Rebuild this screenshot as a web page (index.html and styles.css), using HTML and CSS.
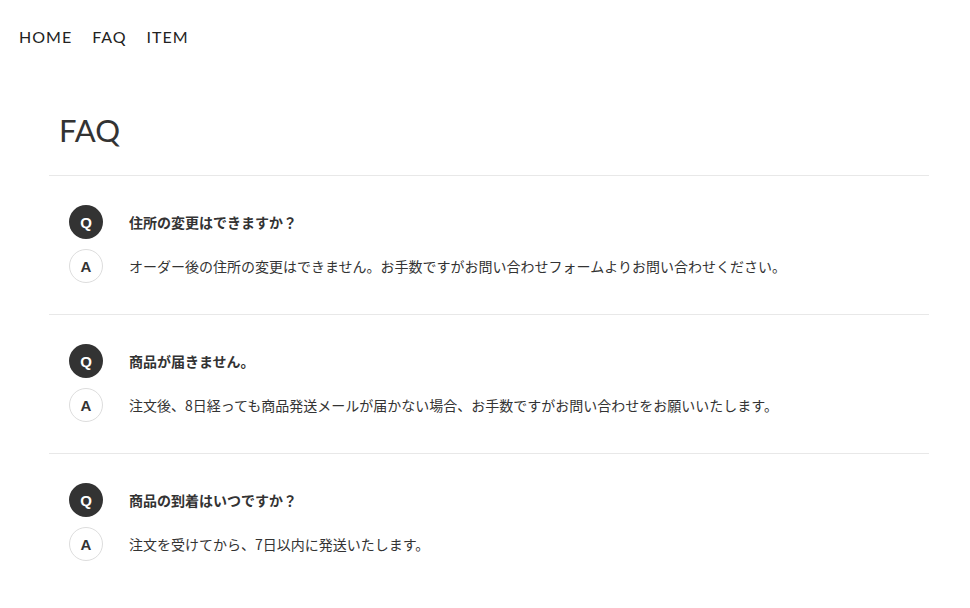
FILE: index.html
```html
<!DOCTYPE html>
<html lang="ja">
<head>
<meta charset="utf-8">
<title>FAQ</title>
<link rel="stylesheet" href="styles.css">
</head>
<body>
<header class="site-header">
  <nav class="nav">
    <a class="nav-link" href="#">HOME</a>
    <a class="nav-link" href="#">FAQ</a>
    <a class="nav-link" href="#">ITEM</a>
  </nav>
</header>
<main class="faq">
  <h1 class="faq-title">FAQ</h1>
  <ul class="faq-list">
    <li class="faq-item">
      <div class="faq-row">
        <span class="badge badge-q">Q</span>
        <p class="question">住所の変更はできますか？</p>
      </div>
      <div class="faq-row">
        <span class="badge badge-a">A</span>
        <p class="answer">オーダー後の住所の変更はできません。お手数ですがお問い合わせフォームよりお問い合わせください。</p>
      </div>
    </li>
    <li class="faq-item">
      <div class="faq-row">
        <span class="badge badge-q">Q</span>
        <p class="question">商品が届きません。</p>
      </div>
      <div class="faq-row">
        <span class="badge badge-a">A</span>
        <p class="answer">注文後、8日経っても商品発送メールが届かない場合、お手数ですがお問い合わせをお願いいたします。</p>
      </div>
    </li>
    <li class="faq-item">
      <div class="faq-row">
        <span class="badge badge-q">Q</span>
        <p class="question">商品の到着はいつですか？</p>
      </div>
      <div class="faq-row">
        <span class="badge badge-a">A</span>
        <p class="answer">注文を受けてから、7日以内に発送いたします。</p>
      </div>
    </li>
  </ul>
</main>
</body>
</html>
```
FILE: styles.css
```css
* { box-sizing: border-box; }
html, body { margin: 0; padding: 0; background: #fff; }
body {
  font-family: Lato, "Noto Sans CJK JP", sans-serif;
  color: #333;
}
.site-header {
  padding: 26px 19px 0;
}
.nav {
  display: flex;
  gap: 20px;
}
.nav-link {
  font-family: Lato, sans-serif;
  font-size: 16px;
  letter-spacing: 1px;
  color: #222;
  text-decoration: none;
  line-height: 22px;
}
.faq {
  margin: 0 41px 0 49px;
  padding-top: 62px;
}
.faq-title {
  font-family: Lato, sans-serif;
  font-weight: 400;
  font-size: 31px;
  line-height: 40px;
  margin: 0 0 25px;
  padding-left: 10px;
  color: #333;
}
.faq-list {
  list-style: none;
  margin: 0;
  padding: 0;
}
.faq-item {
  border-top: 1px solid #e8e8e8;
  padding: 29px 20px 31px;
  display: flex;
  flex-direction: column;
  gap: 10px;
}
.faq-row {
  display: flex;
  align-items: center;
  gap: 26px;
}
.badge {
  flex: none;
  width: 34px;
  height: 34px;
  border-radius: 50%;
  display: flex;
  align-items: center;
  justify-content: center;
  font-family: "Liberation Sans", Arial, sans-serif;
  font-weight: 700;
  font-size: 15px;
}
.badge-q {
  background: #333;
  color: #fff;
}
.badge-a {
  background: #fff;
  border: 1px solid #ddd;
  color: #333;
}
.question, .answer {
  margin: 0;
  font-family: "Noto Sans CJK JP", sans-serif;
  font-size: 14px;
  line-height: 20px;
  color: #333;
}
.question { font-weight: 700; }
.answer { font-weight: 400; }
```
